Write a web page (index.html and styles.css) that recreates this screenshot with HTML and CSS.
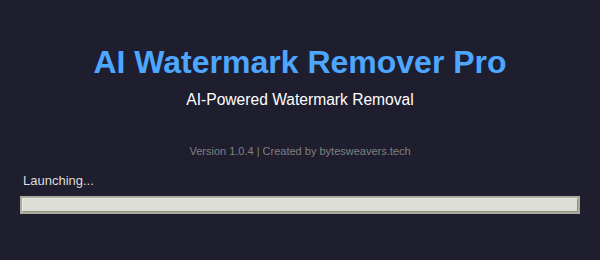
FILE: index.html
```html
<!DOCTYPE html>
<html lang="en">
<head>
    <meta charset="UTF-8">
    <title>AI Watermark Remover Pro</title>
    <link rel="stylesheet" href="styles.css">
</head>
<body>
    <div class="splash">
        <h1 class="title">AI Watermark Remover Pro</h1>
        <div class="subtitle">AI-Powered Watermark Removal</div>
        <div class="version">Version 1.0.4 | Created by bytesweavers.tech</div>

        <div class="status">Launching...</div>
        <div class="progress">
            <div class="progress-fill"></div>
        </div>
    </div>
</body>
</html>
```

FILE: styles.css
```css
body {
    margin: 0;
    background-color: #1e1e2e;
    font-family: "Liberation Sans", Arial, sans-serif;
}
.splash {
    padding: 44px 20px 0 20px;
}
.title {
    margin: 0;
    font-size: 32px;
    line-height: 36px;
    font-weight: bold;
    color: #4da6ff;
    text-align: center;
}
.subtitle {
    margin-top: 10px;
    font-size: 15.6px;
    line-height: 20px;
    color: #ffffff;
    text-align: center;
}
.version {
    margin-top: 34px;
    font-size: 11px;
    line-height: 14px;
    color: #808080;
    text-align: center;
}
.status {
    margin-top: 15px;
    padding-left: 3px;
    font-size: 13px;
    line-height: 16px;
    color: #dddddd;
}
.progress {
    margin-top: 7px;
    height: 18px;
    box-sizing: border-box;
    border: 2px solid #a9ac9a;
    background-color: #dcddd4;
}
.progress-fill {
    height: 100%;
    box-sizing: border-box;
    border-top: 1px solid #eaebe4;
    border-left: 1px solid #eaebe4;
    border-right: 1px solid #8f927f;
    border-bottom: 1px solid #8f927f;
}
```
